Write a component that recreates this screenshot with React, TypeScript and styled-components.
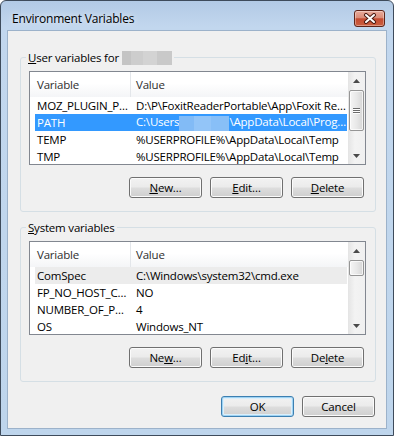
import React from 'react';
import styled, { createGlobalStyle } from 'styled-components';

const GlobalStyle = createGlobalStyle`
	html, body {
		margin: 0;
		padding: 0;
		background: #ffffff;
	}
	body {
		font-family: 'Segoe UI', 'Open Sans', sans-serif;
		font-size: 11.5px;
		letter-spacing: -0.2px;
		color: #000000;
	}
	* {
		box-sizing: border-box;
	}
`;

const Window = styled.div`
	display: flex;
	flex-direction: column;
	width: 394px;
	height: 436px;
	padding: 0 6px 6px;
	border: 1px solid #3e4b5b;
	border-radius: 6px 6px 0 0;
	background: linear-gradient(#b2cae5 0px, #c2d7ee 26px, #bed5ec 100%);
`;

const TitleBar = styled.div`
	display: flex;
	align-items: flex-start;
	justify-content: space-between;
	height: 29px;
	flex-shrink: 0;
`;

const Title = styled.div`
	margin: 10px 0 0 5px;
	font-size: 12px;
	line-height: 16px;
	text-shadow: 0 0 6px rgba(255, 255, 255, 0.9);
`;

const CloseButton = styled.div`
	display: flex;
	justify-content: center;
	align-items: center;
	width: 31px;
	height: 17px;
	margin: 9px 2px 0 0;
	border: 1px solid #5e2419;
	border-radius: 3px;
	background: linear-gradient(#e9ab9c 0%, #da8c78 45%, #c44b31 52%, #cb5f40 100%);
	box-shadow: inset 0 0 0 1px rgba(255, 255, 255, 0.35);
`;

const Client = styled.div`
	display: flex;
	flex-direction: column;
	flex: 1;
	padding: 0 10px 0 12px;
	border: 1px solid #9cb2ca;
	background: #f0f0f0;
`;

const Group = styled.div`
	display: flex;
	flex-direction: column;
	margin-top: 26px;
	padding: 0 9px 13px 8px;
	border: 1px solid #d5dfe5;
	border-radius: 3px;

	& + & {
		margin-top: 15px;
	}
`;

const GroupLabel = styled.div`
	align-self: flex-start;
	margin: -8px 0 0 -3px;
	padding: 0 2px;
	height: 15px;
	line-height: 15px;
	background: #f0f0f0;
`;

const AccessKey = styled.span`
	text-decoration: underline;
	text-underline-offset: 1px;
`;

const NameMask = styled.span`
	display: inline-block;
	width: 50px;
	height: 14px;
	margin-left: 3px;
	vertical-align: -3px;
	background: linear-gradient(to right, #c4c4c4 0 18%, #cdcdcd 18% 42%, #d3d3d3 42% 70%, #c9c9c9 70% 100%);
`;

const ListView = styled.div`
	display: flex;
	height: 94px;
	margin-top: 6px;
	border: 1px solid #828790;
	background: #ffffff;
	overflow: hidden;
`;

const ListBody = styled.div`
	display: flex;
	flex-direction: column;
	flex: 1;
	min-width: 0;
`;

const HeaderRow = styled.div`
	display: flex;
	flex-shrink: 0;
	height: 25px;
	background: linear-gradient(#ffffff 0%, #ffffff 45%, #f4f5f7 100%);
	color: #2e2e2e;
`;

const HeaderCell = styled.div<{ $width?: number }>`
	display: flex;
	align-items: center;
	${({ $width }) => ($width ? `width: ${$width}px;` : 'flex: 1;')}
	padding-left: ${({ $width }) => ($width ? 7 : 5)}px;
	border-right: ${({ $width }) => ($width ? '1px solid #e3e6ea' : 'none')};
`;

const Row = styled.div<{ $state?: 'selected' | 'inactive' }>`
	display: flex;
	align-items: center;
	flex-shrink: 0;
	width: 312px;
	height: 17px;
	margin-left: 5px;
	white-space: nowrap;
	background: ${({ $state }) =>
		$state === 'selected' ? '#3399ff' : $state === 'inactive' ? '#ececec' : 'transparent'};
	color: ${({ $state }) => ($state === 'selected' ? '#ffffff' : '#000000')};
`;

const NameCell = styled.div`
	width: 99px;
	padding-left: 2px;
	overflow: hidden;
`;

const ValueCell = styled.div`
	flex: 1;
	padding-left: 2px;
	overflow: hidden;
`;

const PathMask = styled.span`
	display: inline-block;
	width: 50px;
	height: 15px;
	vertical-align: middle;
	background: linear-gradient(to right, #82bbf6 0 30%, #93c5f8 30% 65%, #88bff7 65% 100%);
`;

const ScrollBar = styled.div`
	display: flex;
	flex-direction: column;
	width: 17px;
	flex-shrink: 0;
	background: linear-gradient(to right, #e4e4e4, #f3f3f3 40%, #f0f0f0);
`;

const ScrollArrow = styled.div`
	display: flex;
	justify-content: center;
	align-items: center;
	height: 17px;
	flex-shrink: 0;
`;

const ScrollTrack = styled.div`
	flex: 1;
`;

const Thumb = styled.div<{ $top: number; $height: number }>`
	display: flex;
	flex-direction: column;
	justify-content: center;
	align-items: center;
	gap: 1px;
	margin: ${({ $top }) => $top}px 1px 0;
	height: ${({ $height }) => $height}px;
	border: 1px solid #959595;
	border-radius: 2px;
	background: linear-gradient(to right, #f5f5f5, #e8e8e8 50%, #d6d6d6);
	box-shadow: inset 0 0 0 1px rgba(255, 255, 255, 0.7);
`;

const Grip = styled.div`
	width: 7px;
	height: 1px;
	background: #6b6b6b;
	box-shadow: 0 1px 0 #ffffff;
`;

const ButtonRow = styled.div`
	display: flex;
	justify-content: flex-end;
	gap: 8px;
	margin-top: 12px;
	padding-right: 2px;
`;

const Button = styled.div<{ $default?: boolean }>`
	display: flex;
	justify-content: center;
	align-items: center;
	width: 73px;
	height: 21px;
	border: 1px solid ${({ $default }) => ($default ? '#3c7fb1' : '#707070')};
	border-radius: 3px;
	background: linear-gradient(#f2f2f2 0%, #ebebeb 48%, #dddddd 52%, #cfcfcf 100%);
	box-shadow: ${({ $default }) =>
		$default ? 'inset 0 0 0 1px #9fd3f3, inset 0 0 0 2px #dbeffb' : 'inset 0 0 0 1px #fbfbfb'};
`;

const DialogButtons = styled(ButtonRow)`
	margin-top: 14px;
	padding-right: 1px;
`;

type Variable = {
	name: string;
	value: React.ReactNode;
	state?: 'selected' | 'inactive';
};

const userVars: Variable[] = [
	{ name: 'MOZ_PLUGIN_P…', value: 'D:\\P\\FoxitReaderPortable\\App\\Foxit Re…' },
	{
		name: 'PATH',
		value: (
			<>
				C:\Users
				<PathMask />
				\AppData\Local\Prog…
			</>
		),
		state: 'selected',
	},
	{ name: 'TEMP', value: '%USERPROFILE%\\AppData\\Local\\Temp' },
	{ name: 'TMP', value: '%USERPROFILE%\\AppData\\Local\\Temp' },
];

const systemVars: Variable[] = [
	{ name: 'ComSpec', value: 'C:\\Windows\\system32\\cmd.exe', state: 'inactive' },
	{ name: 'FP_NO_HOST_C…', value: 'NO' },
	{ name: 'NUMBER_OF_P…', value: '4' },
	{ name: 'OS', value: 'Windows_NT' },
];

function ArrowIcon({ down }: { down?: boolean }) {
	return (
		<svg width="7" height="4" viewBox="0 0 7 4">
			<polygon points={down ? '0,0 7,0 3.5,4' : '0,4 7,4 3.5,0'} fill="#4a4a4a" />
		</svg>
	);
}

function VariableList({
	rows,
	thumbTop,
	thumbHeight,
	grip,
}: {
	rows: Variable[];
	thumbTop: number;
	thumbHeight: number;
	grip?: boolean;
}) {
	return (
		<ListView>
			<ListBody>
				<HeaderRow>
					<HeaderCell $width={101}>Variable</HeaderCell>
					<HeaderCell>Value</HeaderCell>
				</HeaderRow>
				{rows.map((row) => (
					<Row key={row.name} $state={row.state}>
						<NameCell>{row.name}</NameCell>
						<ValueCell>{row.value}</ValueCell>
					</Row>
				))}
			</ListBody>
			<ScrollBar>
				<ScrollArrow>
					<ArrowIcon />
				</ScrollArrow>
				<ScrollTrack>
					<Thumb $top={thumbTop} $height={thumbHeight}>
						{grip && (
							<>
								<Grip />
								<Grip />
								<Grip />
							</>
						)}
					</Thumb>
				</ScrollTrack>
				<ScrollArrow>
					<ArrowIcon down />
				</ScrollArrow>
			</ScrollBar>
		</ListView>
	);
}

export default function App(): React.ReactElement {
	return (
		<>
			<GlobalStyle />
			<Window>
				<TitleBar>
					<Title>Environment Variables</Title>
					<CloseButton>
						<svg width="14" height="11" viewBox="0 0 14 11">
							<path d="M3 2 L11 9 M11 2 L3 9" stroke="#4a1a12" strokeWidth="4" strokeLinecap="round" />
							<path d="M3 2 L11 9 M11 2 L3 9" stroke="#ffffff" strokeWidth="2" strokeLinecap="round" />
						</svg>
					</CloseButton>
				</TitleBar>
				<Client>
					<Group>
						<GroupLabel>
							<AccessKey>U</AccessKey>ser variables for
							<NameMask />
						</GroupLabel>
						<VariableList rows={userVars} thumbTop={1} thumbHeight={41} grip />
						<ButtonRow>
							<Button>
								<AccessKey>N</AccessKey>ew…
							</Button>
							<Button>
								<AccessKey>E</AccessKey>dit…
							</Button>
							<Button>
								<AccessKey>D</AccessKey>elete
							</Button>
						</ButtonRow>
					</Group>
					<Group>
						<GroupLabel>
							<AccessKey>S</AccessKey>ystem variables
						</GroupLabel>
						<VariableList rows={systemVars} thumbTop={1} thumbHeight={16} />
						<ButtonRow>
							<Button>
								Ne<AccessKey>w</AccessKey>…
							</Button>
							<Button>
								Ed<AccessKey>i</AccessKey>t…
							</Button>
							<Button>
								De<AccessKey>l</AccessKey>ete
							</Button>
						</ButtonRow>
					</Group>
					<DialogButtons>
						<Button $default>OK</Button>
						<Button>Cancel</Button>
					</DialogButtons>
				</Client>
			</Window>
		</>
	);
}
